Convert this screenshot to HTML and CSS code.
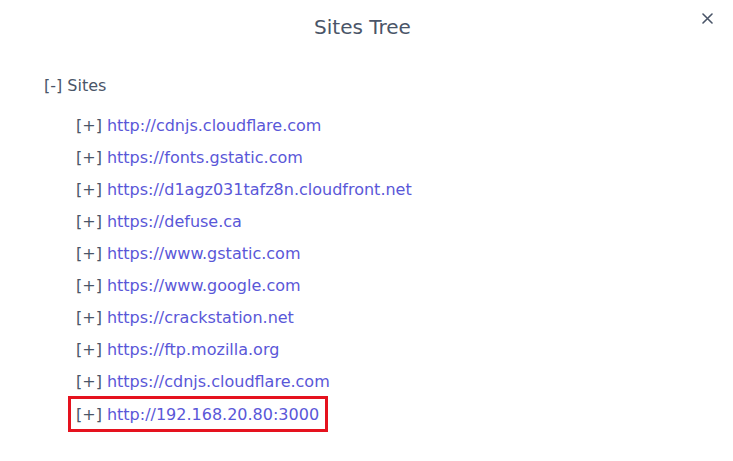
FILE: index.html
```html
<!DOCTYPE html>
<html>
<head>
<meta charset="utf-8">
<link rel="stylesheet" href="styles.css">
</head>
<body>
<div class="modal">
  <div class="header">
    <h1 class="title">Sites Tree</h1>
    <button class="close" aria-label="Close">
      <svg width="11" height="11" viewBox="0 0 11 11"><path d="M1 1L10 10M10 1L1 10" stroke="#4a5568" stroke-width="1.6" stroke-linecap="round"/></svg>
    </button>
  </div>
  <div class="tree">
    <div class="root"><span class="toggle">[-]</span> Sites</div>
    <ul class="children">
      <li class="item"><span class="toggle">[+]</span> <a class="link">http://cdnjs.cloudflare.com</a></li>
      <li class="item"><span class="toggle">[+]</span> <a class="link">https://fonts.gstatic.com</a></li>
      <li class="item"><span class="toggle">[+]</span> <a class="link">https://d1agz031tafz8n.cloudfront.net</a></li>
      <li class="item"><span class="toggle">[+]</span> <a class="link">https://defuse.ca</a></li>
      <li class="item"><span class="toggle">[+]</span> <a class="link">https://www.gstatic.com</a></li>
      <li class="item"><span class="toggle">[+]</span> <a class="link">https://www.google.com</a></li>
      <li class="item"><span class="toggle">[+]</span> <a class="link">https://crackstation.net</a></li>
      <li class="item"><span class="toggle">[+]</span> <a class="link">https://ftp.mozilla.org</a></li>
      <li class="item"><span class="toggle">[+]</span> <a class="link">https://cdnjs.cloudflare.com</a></li>
      <li class="item highlight"><span class="toggle">[+]</span> <a class="link">http://192.168.20.80:3000</a></li>
    </ul>
  </div>
</div>
</body>
</html>
```
FILE: styles.css
```css
* { box-sizing: border-box; }
html, body { margin: 0; padding: 0; background: #fff; }
body { font-family: "DejaVu Sans", sans-serif; color: #4a5568; }
.modal { width: 733px; height: 461px; background: #fff; }
.header { position: relative; height: 52px; display: flex; justify-content: center; align-items: center; padding-right: 8px; }
.title { margin: 0; font-size: 20px; font-weight: normal; color: #4a5568; padding-top: 1px; }
.close { position: absolute; right: 20px; top: 13px; border: 0; background: none; padding: 0; width: 11px; height: 11px; display: flex; }
.tree { padding: 22px 0 0 44px; font-size: 16px; }
.root { line-height: 24px; }
.children { list-style: none; margin: 11px 0 0 0; padding: 0 0 0 32px; }
.item { display: flex; width: max-content; gap: 5px; align-items: center; height: 32px; white-space: pre; }
.link { color: #5a57d8; text-decoration: none; }
.highlight { border: 3px solid #e5121e; padding: 0 6px 0 5px; margin-left: -8px; height: 36px; margin-top: -1px; }
```
